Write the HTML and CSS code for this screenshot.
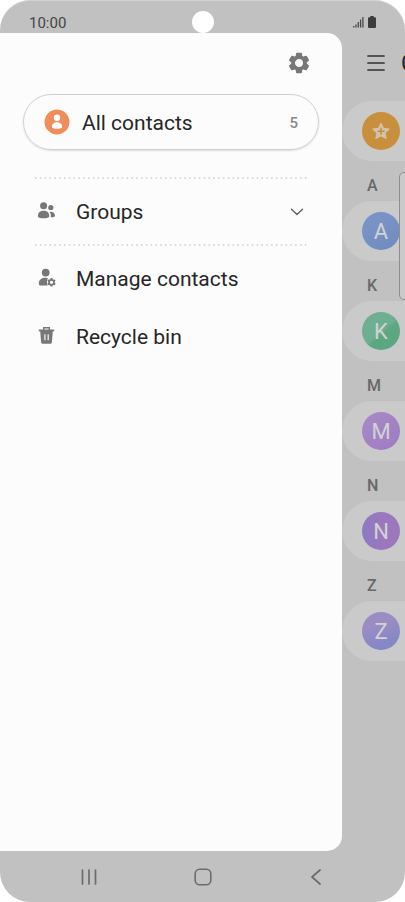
FILE: index.html
```html
<!DOCTYPE html>
<html lang="en">
<head>
<meta charset="utf-8">
<meta name="viewport" content="width=device-width, initial-scale=1">
<title>Contacts</title>
<link rel="stylesheet" href="styles.css">
</head>
<body>
<div class="phone">
  <header class="status">
    <span class="time">10:00</span>
    <span class="camera"></span>
    <svg class="signals" width="24" height="12" viewBox="0 0 24 12" aria-hidden="true">
      <path d="M.7 10v1.500M3 8.500v3M5.300 6v5.500M7.600 3.500v8M9.900 1v10.500" stroke="#484848" stroke-width="1.300"/>
      <path d="M17.300 0h3.400v1.200h1.200q1.100 0 1.100 1.100v8.600q0 1.100-1.100 1.100h-5.800q-1.100 0-1.100-1.100V2.300q0-1.100 1.100-1.100h1.200z" fill="#3c3c3c"/>
    </svg>
  </header>

  <main class="stage">
    <nav class="drawer" aria-label="Contacts menu">
      <div class="drawer-top">
        <button class="icon-button" aria-label="Settings">
          <svg width="24" height="24" viewBox="0 0 24 24"><path fill="#777" stroke="#777" stroke-width="1.200" stroke-linejoin="round" fill-rule="evenodd" d="M19.140 12.940c.040-.3.060-.61.060-.94s-.020-.64-.070-.94l2.030-1.580c.18-.14.230-.41.120-.61l-1.920-3.320c-.12-.22-.37-.29-.59-.22l-2.390.96c-.5-.38-1.030-.7-1.620-.94l-.36-2.540c-.040-.24-.24-.41-.48-.41h-3.840c-.24 0-.43.17-.47.41l-.36 2.540c-.59.24-1.130.57-1.620.94l-2.390-.96c-.22-.080-.47 0-.59.22L2.740 8.870c-.12.21-.080.47.120.61l2.030 1.580c-.050.3-.09.630-.09.940s.020.640.070.940l-2.030 1.580c-.18.14-.23.410-.12.610l1.920 3.320c.12.220.37.290.59.220l2.390-.96c.5.380 1.030.7 1.620.94l.36 2.540c.050.24.24.41.48.41h3.840c.24 0 .44-.17.47-.41l.36-2.540c.59-.24 1.130-.56 1.620-.94l2.390.96c.22.080.47 0 .59-.22l1.920-3.320c.12-.22.070-.47-.12-.61zM12 16.600a4.600 4.600 0 1 1 0-9.200a4.600 4.600 0 0 1 0 9.200z"/></svg>
        </button>
      </div>
      <a class="account" href="#all">
        <svg width="26" height="26" viewBox="0 0 26 26" aria-hidden="true"><circle cx="13" cy="13" r="12.500" fill="#f08d5d"/><circle cx="13" cy="8.700" r="3.200" fill="#fff"/><path d="M7.900 17.700c0-3 2.300-4.500 5.100-4.500s5.100 1.500 5.100 4.500c0 1.500-2.300 2-5.100 2s-5.100-.5-5.100-2z" fill="#fff"/></svg>
        <span class="account-name">All contacts</span>
        <span class="count">5</span>
      </a>
      <svg class="dots" aria-hidden="true"><line x1="0" y1="1" x2="100%" y2="1" pathLength="170" stroke="#cfcfcf" stroke-width="1.500" stroke-dasharray="1 2"/></svg>
      <button class="row row-groups" aria-expanded="false">
        <svg class="row-icon" width="20" height="20" viewBox="0 0 20 20" aria-hidden="true" fill="#777"><circle cx="6.600" cy="4.700" r="3.500"/><path d="M.9 15.200c0-3.900 2.500-5.500 5.700-5.500s5.700 1.600 5.700 5.500c0 1.400-2.500 2-5.700 2s-5.700-.6-5.700-2z"/><circle cx="13.800" cy="6.500" r="2.600"/><path d="M12.500 10.700c3.200-.4 5.500 1.300 5.500 4 0 1-1.700 1.600-4.300 1.600.5-2.200 0-4.200-1.200-5.600z"/></svg>
        <span>Groups</span>
        <svg class="chevron" width="14" height="8" viewBox="0 0 14 8" aria-hidden="true"><path d="M1.500 1.300L7 6.500l5.500-5.200" fill="none" stroke="#666" stroke-width="1.500" stroke-linecap="round" stroke-linejoin="round"/></svg>
      </button>
      <svg class="dots" aria-hidden="true"><line x1="0" y1="1" x2="100%" y2="1" pathLength="170" stroke="#cfcfcf" stroke-width="1.500" stroke-dasharray="1 2"/></svg>
      <div class="links">
        <a class="row" href="#manage">
          <svg class="row-icon" width="20" height="20" viewBox="0 0 20 20" aria-hidden="true"><circle cx="8.700" cy="4.600" r="3.900" fill="#777"/><path fill="#777" d="M1.800 15.500C1.800 11.700 4.700 9.800 8.700 9.800q1.300 0 2.300.4-2 3.500-.3 7.200H3.300Q1.800 17.400 1.800 15.500z"/><circle cx="14.500" cy="14.300" r="2.500" fill="none" stroke="#777" stroke-width="1.700"/><path d="M14.500 10v1.700M14.500 16.900v1.700M10.800 12.200l1.400.8M16.800 15.600l1.400.8M10.800 16.400l1.400-.8M16.800 13l1.400-.8" stroke="#777" stroke-width="1.900"/></svg>
          <span>Manage contacts</span>
        </a>
        <a class="row" href="#bin">
          <svg class="row-icon" width="20" height="20" viewBox="0 0 20 20" aria-hidden="true"><path d="M1.800 3.500h15.400v1.900H1.800z" fill="#777"/><path d="M6.700 4.500V1.800h5.600v2.700" fill="none" stroke="#777" stroke-width="1.400"/><path d="M3.200 5h12.600l-.9 11.200q-.1 1.500-1.700 1.500H5.800q-1.600 0-1.700-1.500z" fill="#777"/><path d="M7.900 8.300v6M11.200 8.300v6" stroke="#eee" stroke-width="1.300"/></svg>
          <span>Recycle bin</span>
        </a>
      </div>
    </nav>

    <section class="page" aria-label="Contacts">
      <div class="page-top">
        <button class="icon-button" aria-label="Open menu"><svg width="18" height="18" viewBox="0 0 18 18"><path d="M1 2h16M1 9h16M1 16h16" stroke="#303030" stroke-width="1.700" stroke-linecap="round"/></svg></button>
        <h1>Contacts</h1>
      </div>
      <a class="contact" href="#favourites"><span class="avatar star"><svg width="20" height="20" viewBox="0 0 18 18" aria-hidden="true"><path d="M9 2l2.200 4.600 5.100.6-3.700 3.500 1 5.100L9 13.300l-4.600 2.500 1-5.100-3.700-3.500 5.100-.6z" fill="#d0c3ae" stroke="#d0c3ae" stroke-linejoin="round"/><path d="M9 6v6.400M5.800 9.200h6.400" stroke="#c8903d" stroke-width="1.400"/></svg></span></a>
      <h2>A</h2>
      <a class="contact" href="#a"><span class="avatar blue">A</span></a>
      <h2>K</h2>
      <a class="contact" href="#k"><span class="avatar green">K</span></a>
      <h2>M</h2>
      <a class="contact" href="#m"><span class="avatar mauve">M</span></a>
      <h2>N</h2>
      <a class="contact" href="#n"><span class="avatar purple">N</span></a>
      <h2>Z</h2>
      <a class="contact" href="#z"><span class="avatar violet">Z</span></a>
      <div class="index-bar"></div>
    </section>
  </main>

  <footer class="system-nav">
    <button class="icon-button" aria-label="Recent apps"><svg width="18" height="18" viewBox="0 0 18 18"><path d="M2.500 2v14M9 2v14M15.500 2v14" stroke="#6c6c6c" stroke-width="1.700" stroke-linecap="round"/></svg></button>
    <button class="icon-button" aria-label="Home"><svg width="18" height="18" viewBox="0 0 18 18"><rect x="1.200" y="1.200" width="15.600" height="15.600" rx="4.500" fill="none" stroke="#6c6c6c" stroke-width="1.600"/></svg></button>
    <button class="icon-button" aria-label="Back"><svg width="18" height="18" viewBox="0 0 18 18"><path d="M13 2L5 9l8 7" fill="none" stroke="#6c6c6c" stroke-width="1.700" stroke-linecap="round" stroke-linejoin="round"/></svg></button>
  </footer>
</div>
</body>
</html>
```
FILE: styles.css
```css
* {
  box-sizing: border-box;
}

body {
  margin: 0;
  background: #fff;
  color: #262626;
  font-family: Roboto, "Liberation Sans", sans-serif;
}

a {
  color: inherit;
  text-decoration: none;
}

button {
  padding: 0;
  border: 0;
  background: none;
  color: inherit;
  font: inherit;
  text-align: left;
}

svg {
  display: block;
  flex: none;
}

.phone {
  display: flex;
  flex-direction: column;
  min-height: 100vh;
  overflow: hidden;
  border-radius: 30px;
  border-top: 1px solid #d2d2d2;
  background: #c1c1c1;
}

.status {
  display: grid;
  grid-template-columns: 1fr auto 1fr;
  align-items: end;
  height: 32px;
  padding: 0 28px 0 29px;
}

.time {
  padding-bottom: 1px;
  color: #454545;
  font-size: 15px;
  line-height: 18px;
}

.camera {
  width: 22px;
  height: 22px;
  border-radius: 50%;
  background: #fff;
}

.signals {
  justify-self: end;
  margin-bottom: 5px;
}

.stage {
  display: flex;
  flex: 1;
}

.drawer {
  flex: 1;
  border-radius: 0 15px 15px 0;
  background: #fcfcfc;
}

.drawer-top {
  display: flex;
  justify-content: flex-end;
  align-items: center;
  height: 60px;
  padding-right: 31px;
}

.account {
  display: flex;
  align-items: center;
  height: 56px;
  margin: 1px 23px 27px;
  padding: 0 20px;
  border: 1px solid #d0d0d0;
  border-radius: 28px;
  box-shadow: 0 1px 2px #ddd;
  font-size: 21px;
}

.account-name {
  flex: 1;
  margin-left: 12px;
  padding-top: 2px;
}

.count {
  padding-top: 2px;
  color: #8a8a8a;
  font-size: 15px;
  font-weight: 500;
}

.dots {
  width: calc(100% - 69px);
  height: 2px;
  margin-left: 35px;
}

.links {
  padding-top: 4px;
}

.row {
  display: flex;
  align-items: center;
  width: 100%;
  height: 58px;
  padding: 0 38px 0 37px;
  font-size: 21px;
}

.row-groups {
  height: 65px;
}

.row-icon {
  margin: 0 19px 2px 0;
}

.chevron {
  margin-left: auto;
}

.page {
  position: relative;
  width: 63px;
  overflow: hidden;
}

.page-top {
  display: flex;
  align-items: center;
  gap: 16px;
  height: 60px;
  margin-bottom: 8px;
  padding-left: 25px;
}

h1 {
  margin: 0;
  font-size: 23px;
  font-weight: 400;
}

h2 {
  height: 40px;
  margin: 0;
  padding-left: 25px;
  color: #686868;
  font-size: 16px;
  font-weight: 500;
  line-height: 50px;
}

.contact {
  display: flex;
  align-items: center;
  height: 60px;
  padding-left: 20px;
  border-radius: 30px 0 0 30px;
  background: #cacaca;
}

.avatar {
  display: grid;
  flex: none;
  place-items: center;
  width: 38px;
  height: 38px;
  border-radius: 50%;
  color: #d2d2d2;
  font-size: 22px;
}

.star { background: #c8903d; }
.blue { background: linear-gradient(150deg, #7893c5 30%, #6f8abc); }
.green { background: linear-gradient(140deg, #6eae91 50%, #5aa782 58%); }
.mauve { background: linear-gradient(135deg, #ab8ac8, #9c7bc1); }
.purple { background: linear-gradient(90deg, #8b7ac4, #9b78bd 55%); }
.violet { background: linear-gradient(160deg, #9b8cc4 35%, #8588c5 75%); }

.index-bar {
  position: absolute;
  top: 139px;
  right: -10px;
  width: 16px;
  height: 128px;
  border: 1px solid #8e8e8e;
  border-radius: 5px;
  background: #cacaca;
}

.system-nav {
  display: flex;
  justify-content: space-between;
  align-items: center;
  height: 51px;
  padding: 0 80px;
}
```
